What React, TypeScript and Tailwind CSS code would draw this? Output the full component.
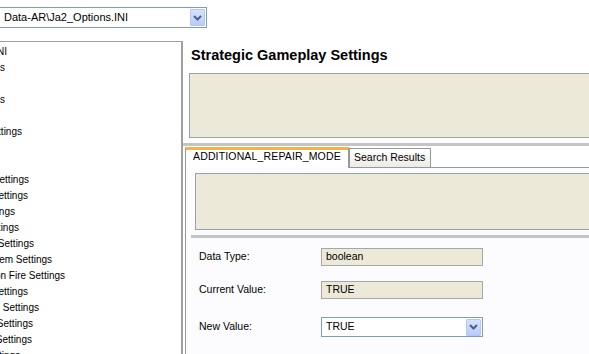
import React from "react";

const treeRows: { name: string; end: string }[] = [
  { name: "Ja2_Options.INI", end: "w-[7px]" },
  { name: "Data Settings", end: "w-[5px]" },
  { name: "", end: "w-0" },
  { name: "Graphics Settings", end: "w-[5px]" },
  { name: "", end: "w-0" },
  { name: "Laptop Settings", end: "w-[22px]" },
  { name: "", end: "w-0" },
  { name: "", end: "w-0" },
  { name: "Tactical Interface Settings", end: "w-[29px]" },
  { name: "Tactical Gameplay Settings", end: "w-[28px]" },
  { name: "Tactical Difficulty Settings", end: "w-[15px]" },
  { name: "Tactical Weapon Settings", end: "w-[19px]" },
  { name: "Tactical Explosives Settings", end: "w-[34px]" },
  { name: "Tactical Cover System Settings", end: "w-[52px]" },
  { name: "Tactical Suppression Fire Settings", end: "w-[65px]" },
  { name: "Tactical Alt Settings", end: "w-[28px]" },
  { name: "Strategic AI Settings", end: "w-[39px]" },
  { name: "Strategic Event Settings", end: "w-[33px]" },
  { name: "Strategic Militia Settings", end: "w-[32px]" },
  { name: "Strategic Merc Settings", end: "w-[20px]" },
];

function ComboButton() {
  return (
    <div className="flex h-[17px] w-[15px] shrink-0 items-center justify-center rounded-[1px] border border-[#b4c6f3] bg-gradient-to-b from-[#d6e1fd] to-[#b9cbf8]">
      <svg width="9" height="6" viewBox="0 0 9 6">
        <path d="M1 1 L4.5 4.5 L8 1" fill="none" stroke="#4d6185" strokeWidth="2" />
      </svg>
    </div>
  );
}

function Field({ label, value }: { label: string; value: string }) {
  return (
    <div className="flex items-center">
      <span className="w-[122px] shrink-0">{label}</span>
      <div className="flex h-[18px] w-[162px] items-center border border-[#a7a7a7] bg-[#ece9d8] pl-[4px]">{value}</div>
    </div>
  );
}

export default function App() {
  return (
    <div className="flex h-[354px] w-[589px] flex-col overflow-hidden bg-white font-['Liberation_Sans',Arial,sans-serif] text-[10.5px] text-black">
      {/* file selector */}
      <div className="h-[41px] shrink-0 pt-[7px]">
        <div className="ml-[-2px] flex h-[21px] w-[209px] items-center border border-[#7f9db9] bg-white pl-[5px] pr-px text-[11px]">
          <span className="flex-1 whitespace-nowrap">Data-AR\Ja2_Options.INI</span>
          <ComboButton />
        </div>
      </div>

      <div className="flex min-h-0 flex-1">
        {/* section tree, scrolled to the right */}
        <div className="w-[183px] shrink-0 overflow-hidden border-t border-r-2 border-[#a0a0a0] pt-px text-[10px]">
          {treeRows.map((r, i) => (
            <div key={i} className={`flex h-4 items-center justify-end overflow-hidden whitespace-nowrap ${r.end}`}>
              <span className="shrink-0">{r.name}</span>
            </div>
          ))}
        </div>

        {/* details */}
        <div className="flex min-w-0 flex-1 flex-col">
          <div className="h-[32px] shrink-0 pl-[8px] pt-[6px] text-[14.5px] font-bold leading-4">Strategic Gameplay Settings</div>
          <div className="ml-[6px] mr-[-10px] h-[65px] shrink-0 border border-[#97a3ab] bg-[#ece9d8]" />
          <div className="mt-[5px] h-[3px] shrink-0 bg-[#c4c4c4]" />

          {/* tabs */}
          <div className="mt-px ml-[2px] flex h-[21px] shrink-0 items-end">
            <div className="flex h-[21px] w-[164px] items-center border-x border-t-[3px] border-x-[#919b9c] border-t-[#f0b448] bg-white pb-[4px] pl-[7px] tracking-[0.15px]">
              ADDITIONAL_REPAIR_MODE
            </div>
            <div className="flex h-[20px] w-[82px] items-center border border-[#919b9c] bg-gradient-to-b from-white to-[#ecebe5] pl-[4px]">
              Search Results
            </div>
            <div className="h-[20px] flex-1 border-b border-[#919b9c]" />
          </div>

          <div className="ml-[2px] flex flex-1 flex-col border-l border-[#919b9c] bg-[#fcfcfe]">
            <div className="mt-[5px] ml-[9px] mr-[-10px] h-[57px] border border-[#97a3ab] bg-[#ece9d8]" />
            <div className="mt-[5px] ml-[5px] h-[3px] bg-[#c4c4c4]" />
            <div className="ml-[13px] mt-[10px] flex flex-col">
              <Field label="Data Type:" value="boolean" />
              <div className="mt-[15px]">
                <Field label="Current Value:" value="TRUE" />
              </div>
              <div className="mt-[18px] flex items-center">
                <span className="w-[122px] shrink-0">New Value:</span>
                <div className="flex h-[20px] w-[162px] items-center border border-[#7f9db9] bg-white pl-[4px] pr-px">
                  <span className="flex-1">TRUE</span>
                  <ComboButton />
                </div>
              </div>
            </div>
          </div>
        </div>
      </div>
    </div>
  );
}
